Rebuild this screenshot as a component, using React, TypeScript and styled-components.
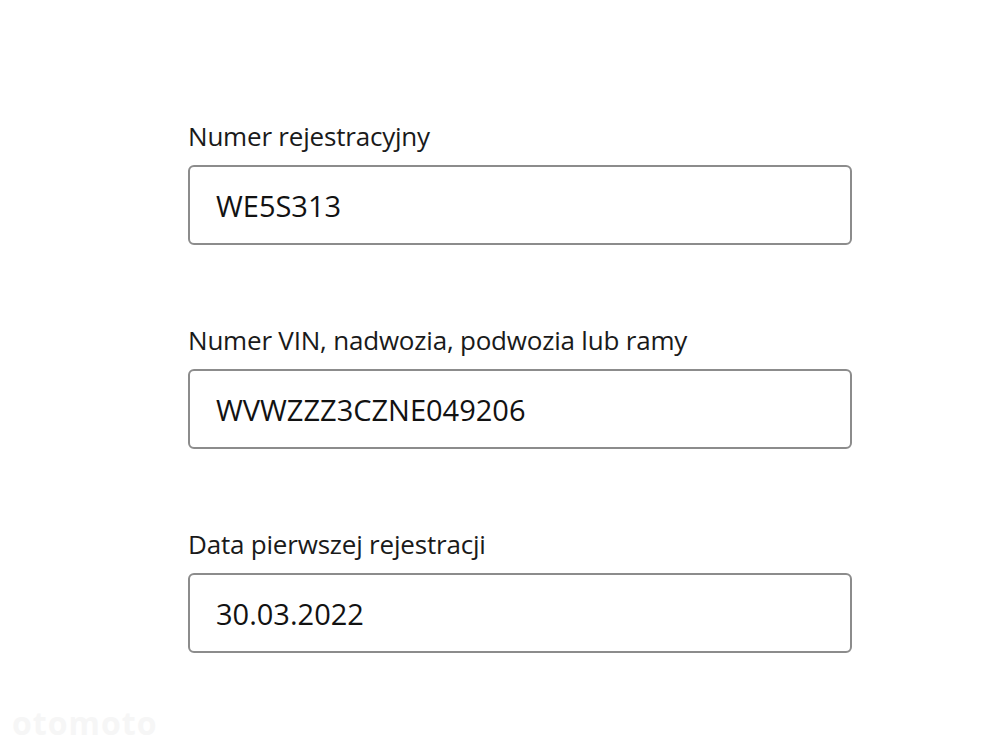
import React from "react";
import styled, { createGlobalStyle } from "styled-components";

const Global = createGlobalStyle`
  html, body { margin: 0; padding: 0; background: #ffffff; }
  body { font-family: "Open Sans", "Noto Sans", sans-serif; }
`;

const Page = styled.main`
  position: relative;
  width: 1000px;
  height: 750px;
  box-sizing: border-box;
  padding: 119px 0 0 188px;
  overflow: hidden;
`;

const Form = styled.div`
  width: 664px;
  display: flex;
  flex-direction: column;
  gap: 78px;
`;

const Field = styled.div`
  display: flex;
  flex-direction: column;
  gap: 12px;
`;

const Label = styled.div`
  font-size: 26px;
  line-height: 34px;
  color: #1a1a1a;
  letter-spacing: -0.2px;
`;

const Box = styled.div`
  height: 80px;
  box-sizing: border-box;
  border: 2px solid #8c8c8c;
  border-radius: 6px;
  padding: 0 26px;
  display: flex;
  align-items: center;
  font-size: 29px;
  color: #121212;
`;

const Watermark = styled.div`
  position: absolute;
  left: 12px;
  bottom: 6px;
  font-size: 32px;
  font-weight: 700;
  color: #f6f6f6;
  letter-spacing: 1px;
`;

const fields = [
  { label: "Numer rejestracyjny", value: "WE5S313" },
  { label: "Numer VIN, nadwozia, podwozia lub ramy", value: "WVWZZZ3CZNE049206" },
  { label: "Data pierwszej rejestracji", value: "30.03.2022" },
];

export default function App() {
  return (
    <Page>
      <Global />
      <Form>
        {fields.map((f) => (
          <Field key={f.label}>
            <Label>{f.label}</Label>
            <Box>{f.value}</Box>
          </Field>
        ))}
      </Form>
      <Watermark>otomoto</Watermark>
    </Page>
  );
}
